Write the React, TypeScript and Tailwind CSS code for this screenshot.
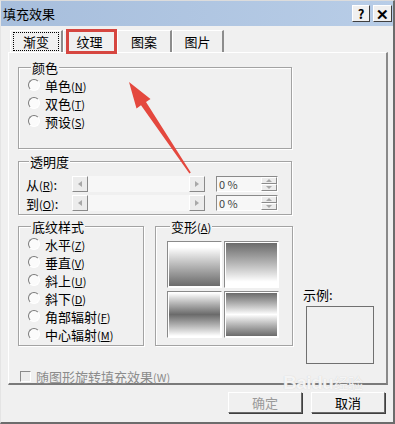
import React from 'react';

const font = "font-['SimSun','Noto_Sans_CJK_SC',sans-serif]";

function Key({ k }: { k: string }) {
  return (
    <span className="text-[11px]">
      (<span className="underline">{k}</span>)
    </span>
  );
}

function Radio({ label, k }: { label: string; k: string }) {
  return (
    <div className="flex items-center h-[18px]">
      <div className="w-[12px] h-[12px] rounded-full border border-t-[#7a7a7a] border-l-[#7a7a7a] border-r-white border-b-white bg-[#fbfbfb]" />
      <span className="ml-[5px] text-[13px] leading-none text-black">
        {label}
        <Key k={k} />
      </span>
    </div>
  );
}

// classic group box: a bordered box with its caption sitting on the top line
function Group({ title, className, children }: { title: React.ReactNode; className: string; children?: React.ReactNode }) {
  return (
    <div className={`border border-[#a3a3a3] shadow-[inset_1px_1px_0_#fff,1px_1px_0_#fff] ${className}`}>
      <div className="-mt-[7px] ml-[3px] w-fit px-[1px] bg-[#f0f0f0] text-[13px] leading-[13px] text-black">{title}</div>
      {children}
    </div>
  );
}

function Arrow({ dir }: { dir: 'l' | 'r' | 'u' | 'd' }) {
  const pts = {
    l: '5,1 1,4 5,7',
    r: '1,1 5,4 1,7',
    u: '0,4 3,1 6,4',
    d: '0,1 3,4 6,1',
  }[dir];
  const w = dir === 'l' || dir === 'r' ? 6 : 7;
  const h = dir === 'l' || dir === 'r' ? 8 : 5;
  return (
    <svg width={w} height={h} viewBox={`0 0 ${w} ${h}`}>
      <polygon points={pts} fill="#a8a8a8" />
    </svg>
  );
}

const raised = 'border border-t-white border-l-white border-r-[#8a8a8a] border-b-[#8a8a8a] bg-[#ececec]';

function SliderRow({ label, k }: { label: string; k: string }) {
  return (
    <div className="flex items-center h-[16px]">
      <div className="w-[46px] text-[13px] leading-none text-black">
        {label}
        <Key k={k} />:
      </div>
      <div className="flex h-[16px] w-[133px]">
        <div className={`w-[16px] h-full flex items-center justify-center ${raised}`}>
          <Arrow dir="l" />
        </div>
        <div className="flex-1 h-full bg-[#f7f7f7]" />
        <div className={`w-[16px] h-full flex items-center justify-center ${raised}`}>
          <Arrow dir="r" />
        </div>
      </div>
      <div className="ml-[11px] flex h-[16px] w-[62px] border border-t-[#8a8a8a] border-l-[#8a8a8a] border-r-white border-b-white">
        <div className="flex-1 bg-[#f7f7f7] text-[11px] leading-[14px] pl-[2px] text-[#444]">0 %</div>
        <div className="w-[16px] flex flex-col">
          <div className={`flex-1 flex items-center justify-center ${raised}`}>
            <Arrow dir="u" />
          </div>
          <div className={`flex-1 flex items-center justify-center ${raised}`}>
            <Arrow dir="d" />
          </div>
        </div>
      </div>
    </div>
  );
}

function Tile({ grad }: { grad: string }) {
  return (
    <div className="w-[55px] h-[47px] border border-t-[#8a8a8a] border-l-[#8a8a8a] border-r-white border-b-white p-[1px] bg-white">
      <div className={`w-full h-full ${grad}`} />
    </div>
  );
}

function Tab({ label, w, focus }: { label: string; w: string; focus?: boolean }) {
  return (
    <div className={`${w} h-[22px] flex items-center justify-center border-t border-l border-t-white border-l-white border-r-2 border-r-[#8c8c8c]`}>
      <span className={`text-[13px] leading-none px-[9px] py-[2px] ${focus ? 'outline-1 outline-dotted outline-black' : ''}`}>{label}</span>
    </div>
  );
}

function Button({ label, disabled }: { label: string; disabled?: boolean }) {
  return (
    <div className={`w-[74px] h-[21px] flex items-center justify-center border border-t-white border-l-white border-r-[#6a6a6a] border-b-[#6a6a6a] shadow-[1px_1px_0_#404040] text-[13px] ${disabled ? 'text-[#9a9a9a]' : 'text-black'}`}>
      {label}
    </div>
  );
}

export default function App() {
  return (
    <div className={`relative w-[395px] h-[424px] bg-[#f0f0f0] overflow-hidden flex flex-col border-l border-t border-l-[#e4e4e4] border-t-[#dcdcdc] border-r-2 border-b-2 border-r-[#6c6c6c] border-b-[#6c6c6c] ${font}`}>
      {/* title bar */}
      <div className="h-[25px] shrink-0 flex items-center bg-linear-to-r from-[#a7bedc] to-[#b8cde7] pl-[2px]">
        <span className="text-[13px] text-black">填充效果</span>
        <div className="ml-auto mr-[1px] flex gap-[3px]">
          <div className="w-[18px] h-[17px] flex items-center justify-center bg-[#f0f0f0] border border-t-white border-l-white border-r-[#404040] border-b-[#404040] text-[13px] font-bold leading-none">?</div>
          <div className="w-[19px] h-[17px] flex items-center justify-center bg-[#f0f0f0] border border-t-white border-l-white border-r-[#404040] border-b-[#404040] text-[15px] font-bold leading-none">✕</div>
        </div>
      </div>

      {/* tabs */}
      <div className="mt-[4px] ml-[9px] flex">
        <Tab label="渐变" w="w-[53px]" focus />
        <Tab label="纹理" w="w-[54px]" />
        <Tab label="图案" w="w-[55px]" />
        <Tab label="图片" w="w-[52px]" />
      </div>

      {/* panel */}
      <div className="ml-[7px] w-[380px] h-[333px] shrink-0 border border-t-white border-l-white border-r-2 border-b-2 border-r-[#8a8a8a] border-b-[#7a7a7a] flex flex-col">
        <Group title="颜色" className="ml-[9px] mt-[14px] w-[274px] h-[89px] pl-[9px]">
          <div className="mt-[2px]">
            <Radio label="单色" k="N" />
            <Radio label="双色" k="T" />
            <Radio label="预设" k="S" />
          </div>
        </Group>

        <Group title="透明度" className="ml-[9px] mt-[12px] w-[274px] h-[58px] pl-[7px]">
          <div className="mt-[8px] flex flex-col gap-[3px]">
            <SliderRow label="从" k="R" />
            <SliderRow label="到" k="O" />
          </div>
        </Group>

        <div className="flex ml-[9px] mt-[11px]">
          <Group title="底纹样式" className="w-[126px] h-[120px] pl-[9px]">
            <div className="mt-[2px]">
              <Radio label="水平" k="Z" />
              <Radio label="垂直" k="V" />
              <Radio label="斜上" k="U" />
              <Radio label="斜下" k="D" />
              <Radio label="角部辐射" k="F" />
              <Radio label="中心辐射" k="M" />
            </div>
          </Group>
          <Group title={<>变形<Key k="A" /></>} className="ml-[11px] w-[138px] h-[120px] pl-[11px]">
            <div className="mt-[7px] grid grid-cols-[55px_55px] gap-x-[2px] gap-y-[3px]">
              <Tile grad="bg-linear-to-b from-white from-10% to-[#6b6b6b]" />
              <Tile grad="bg-linear-to-b from-[#6b6b6b] to-white to-90%" />
              <Tile grad="bg-linear-to-b from-white via-[#6b6b6b] to-white" />
              <Tile grad="bg-linear-to-b from-[#6b6b6b] via-white to-[#6b6b6b]" />
            </div>
          </Group>
          <div className="ml-[10px] mt-[62px] flex flex-col">
            <span className="text-[13px] leading-[13px] text-black">示例:</span>
            <div className="ml-[3px] mt-[5px] w-[68px] h-[58px] border border-[#707070] bg-[#f0f0f0]" />
          </div>
        </div>

        <div className="ml-[11px] mt-[6px] flex items-center">
          <div className="w-[11px] h-[11px] border border-t-[#8a8a8a] border-l-[#8a8a8a] border-r-white border-b-white bg-[#ececec]" />
          <span className="ml-[5px] text-[13px] leading-none text-[#8c8c8c]">
            随图形旋转填充效果<span className="text-[11px]">(W)</span>
          </span>
        </div>
      </div>

      {/* buttons */}
      <div className="mt-[7px] flex justify-end gap-[9px] pr-[8px]">
        <Button label="确定" disabled />
        <Button label="取消" />
      </div>

      {/* overlays */}
      <div className="absolute left-[65px] top-[28px] w-[51px] h-[25px] border-[3px] border-[#d64640]" />
      <svg className="absolute left-0 top-0 pointer-events-none" width="395" height="424">
        <polygon
          points="128,81 149.5,98 145,101 189.8,171.6 188.4,172.4 140,104.3 135.5,107.5"
          fill="#e4483e"
        />
      </svg>
      <div className="absolute left-[282px] top-[372px] leading-[20px] text-[19px] font-bold text-white/80 font-['Liberation_Sans',sans-serif] tracking-tight pointer-events-none [text-shadow:0_0_1px_#c4c4c4]">
        Baidu<span className="font-['Noto_Sans_CJK_SC',sans-serif] text-[15px] font-normal">经验</span>
      </div>
    </div>
  );
}
